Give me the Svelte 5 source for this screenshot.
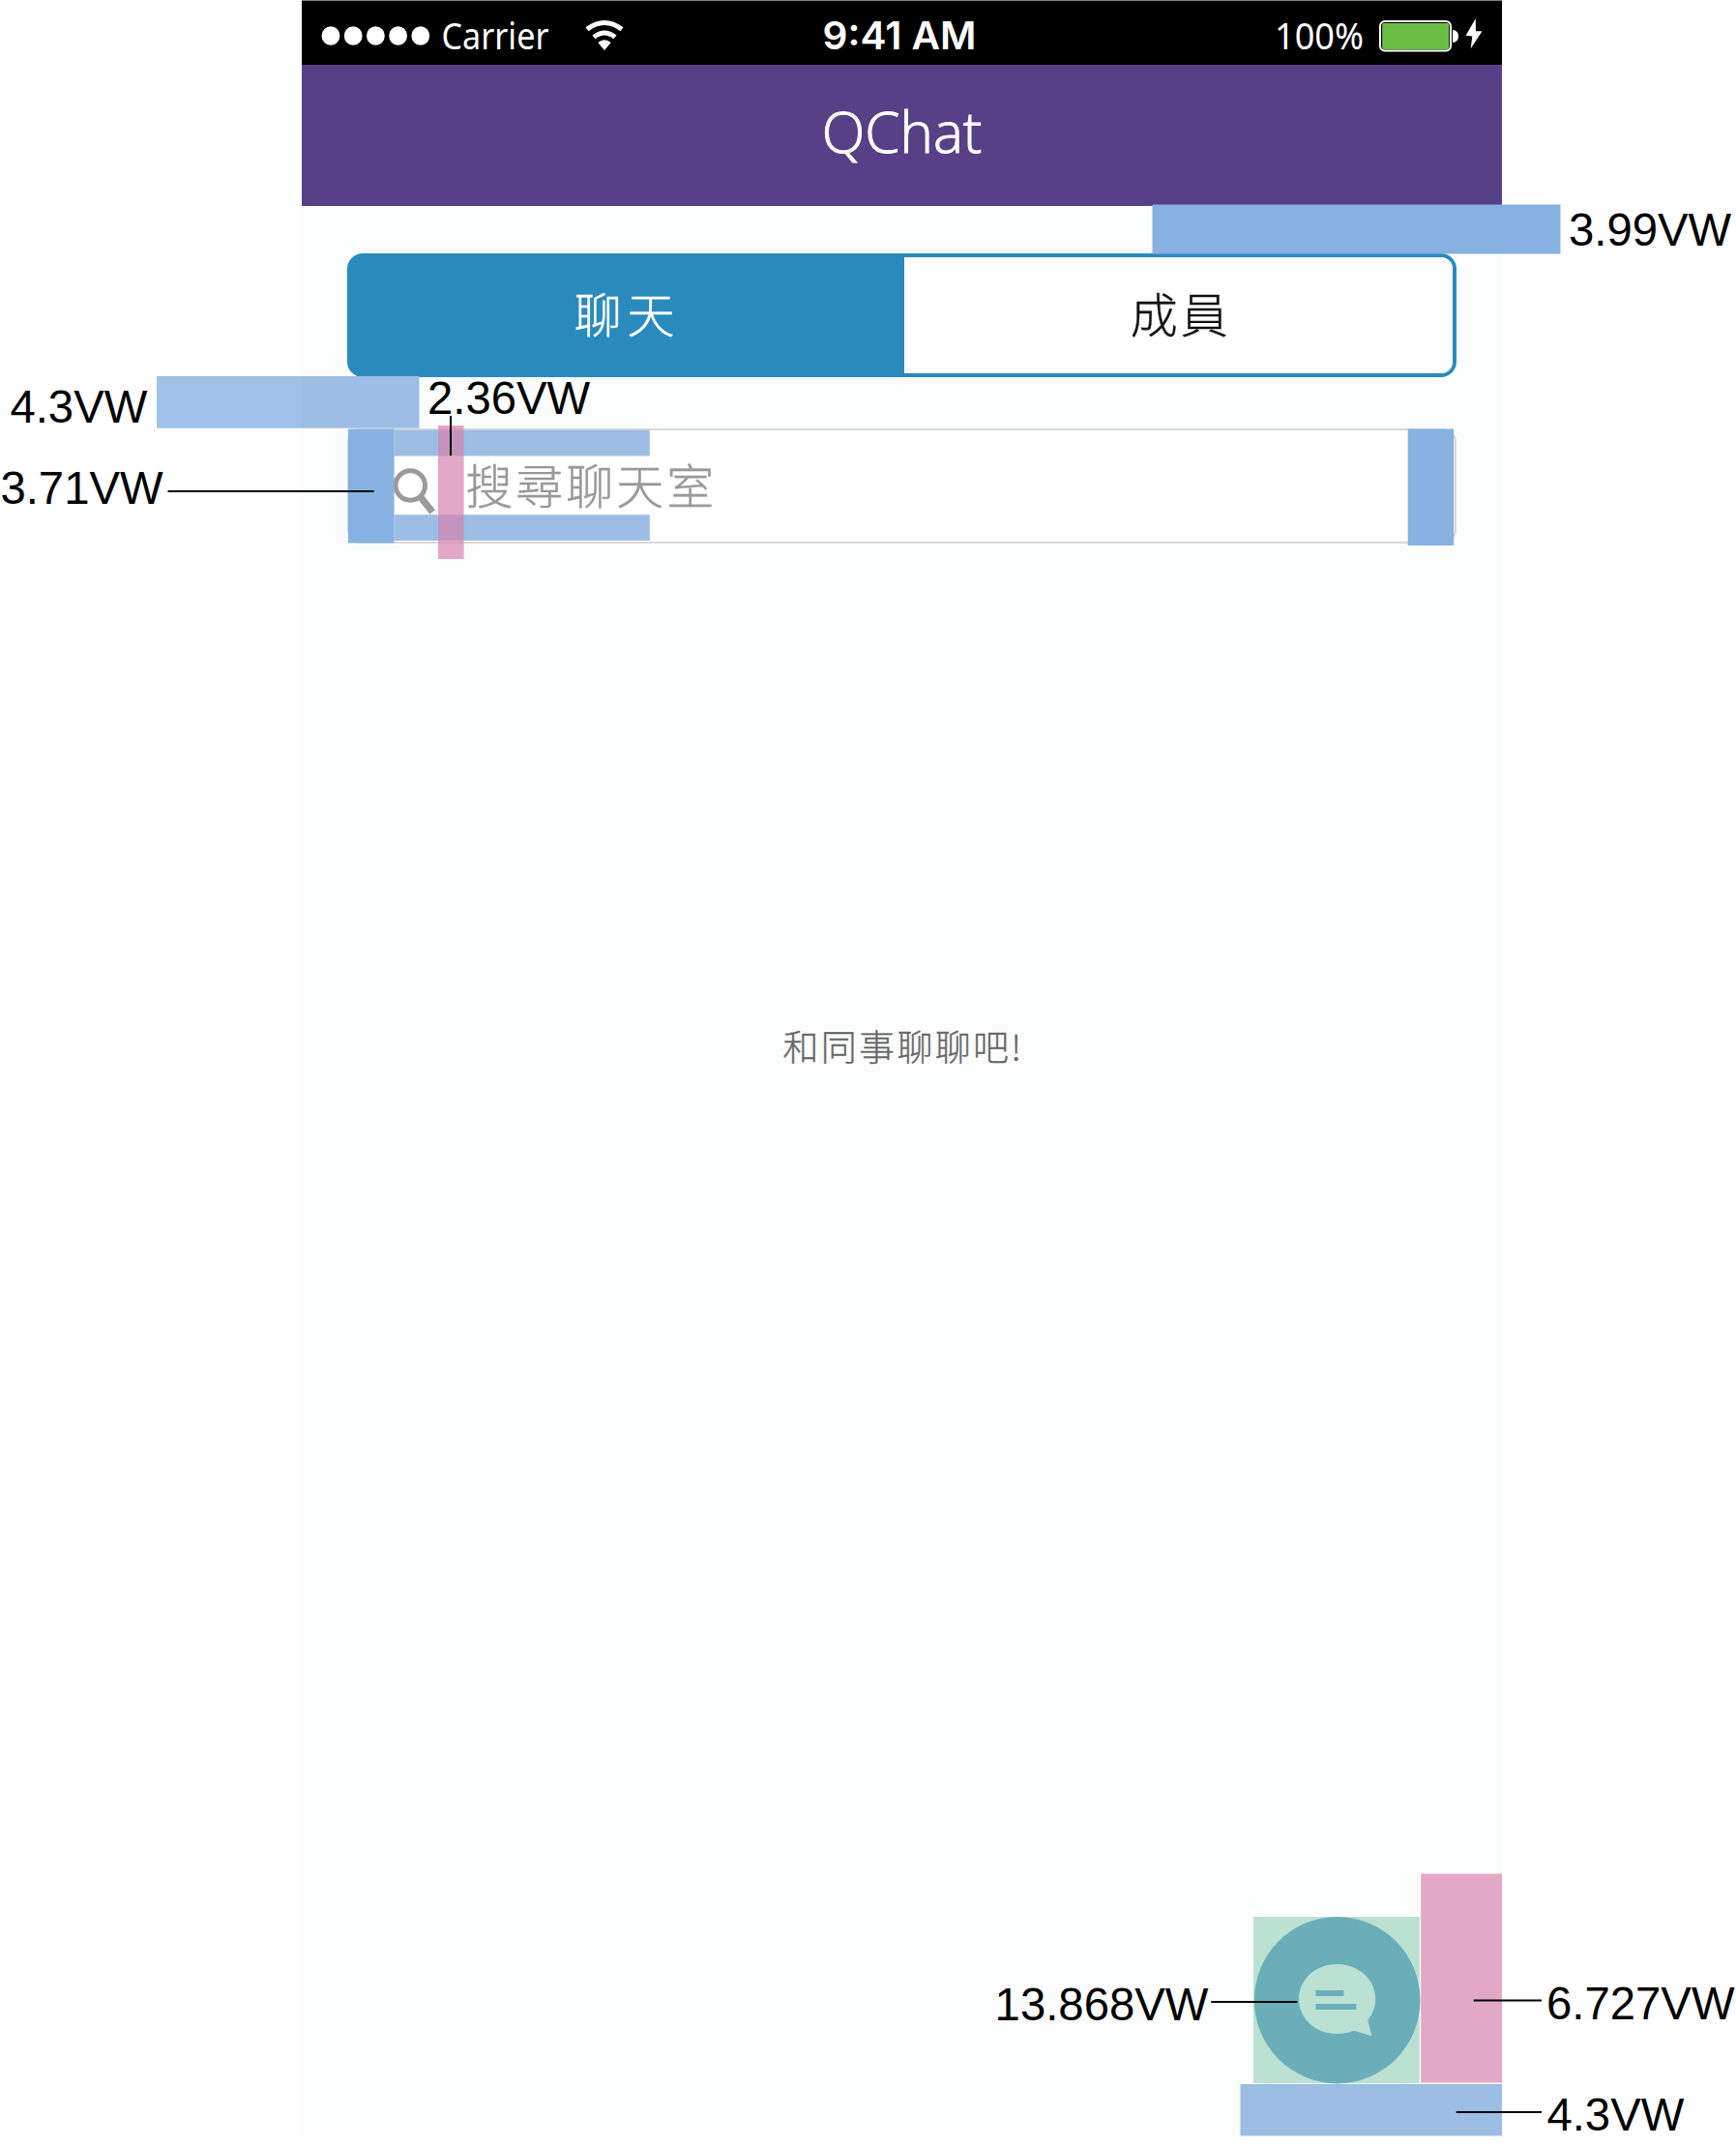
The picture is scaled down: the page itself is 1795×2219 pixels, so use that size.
<script>
  const dots = [342, 365.2, 388.4, 411.6, 434.8];

  const bars = [
    { x: 1191.5, y: 211.5, w: 422, h: 51, tone: 'strong' },
    { x: 162, y: 389, w: 150, h: 53.7, tone: 'soft-out' },
    { x: 312, y: 389, w: 121.5, h: 53.7, tone: 'soft' },
    { x: 407.5, y: 444.7, w: 264.3, h: 26.8, tone: 'soft' },
    { x: 407.5, y: 532.2, w: 264.3, h: 26.8, tone: 'soft' },
    { x: 360, y: 443.5, w: 47.6, h: 118, tone: 'strong' },
    { x: 1455.7, y: 443.5, w: 47.5, h: 120.5, tone: 'strong' },
    { x: 453, y: 440, w: 26.6, h: 138, tone: 'pink' },
    { x: 1469.2, y: 1937.5, w: 83.8, h: 216, tone: 'pink' },
    { x: 1282.5, y: 2155, w: 270.5, h: 53.5, tone: 'soft' }
  ];

  const lines = [
    [173.5, 508, 386.5, 508],
    [466, 430, 466, 471],
    [1252.3, 2070, 1341.3, 2070],
    [1523.7, 2068.5, 1594, 2068.5],
    [1505.7, 2184, 1594, 2184]
  ];

  const labels = [
    { x: 1622, y: 253.6, t: '3.99VW' },
    { x: 10.4, y: 436.6, t: '4.3VW' },
    { x: 442, y: 427.6, t: '2.36VW' },
    { x: 0.4, y: 520.6, t: '3.71VW' },
    { x: 1028.6, y: 2089.2, t: '13.868VW' },
    { x: 1599, y: 2087.6, t: '6.727VW' },
    { x: 1599.4, y: 2203, t: '4.3VW' }
  ];
</script>

<div class="board">
  <main class="phone">
    <svg class="status" viewBox="312 0 1241 67">
      <rect class="edge" x="311" y="0" width="1243" height="1" />
      {#each dots as x}
        <ellipse cx={x} cy="37" rx="9.4" ry="9.8" />
      {/each}
      <text class="thin" x="456.5" y="51" textLength="111" lengthAdjust="spacingAndGlyphs">Carrier</text>
      <path class="arc" d="M607 30.2Q625 16.8 643 30.2" />
      <path class="arc" d="M614 38.4Q625 29.6 636 38.4" />
      <path d="M618.3 44Q625 38.6 631.7 44L625 52Z" />
      <text class="clock" x="850.5" y="51" textLength="159" lengthAdjust="spacingAndGlyphs">9:41 AM</text>
      <text class="thin" x="1318" y="51" textLength="92" lengthAdjust="spacingAndGlyphs">100%</text>
      <rect class="cell" x="1427" y="22" width="73" height="30.5" rx="5" />
      <rect class="charge" x="1429.2" y="24" width="69" height="27" rx="1.5" />
      <path d="M1502 31C1510 31 1510 44 1502 44Z" />
      <path d="M1525.7 19.3L1515.6 36.7L1522.3 37.5L1520.7 50.3L1532.5 32.3L1526 32.3Z" />
    </svg>

    <header class="title">QChat</header>

    <section class="content">
      <nav class="tabs">
        <button class="tab active">聊天</button>
        <button class="tab">成員</button>
      </nav>

      <div class="search">
        <svg class="glass" viewBox="0 0 46 50">
          <circle cx="18.3" cy="18" r="15.3" />
          <path d="M28.5 29.5L41.2 45.5" />
        </svg>
        <span>搜尋聊天室</span>
      </div>

      <p class="empty">和同事聊聊吧!</p>
    </section>
  </main>

  <svg class="spec" viewBox="0 0 1795 2219">
    <rect class="green" x="1296" y="1982" width="171.8" height="172" />
    <ellipse class="fab" cx="1382.7" cy="2068.2" rx="85.8" ry="86.2" />
    <path
      class="green"
      d="M1382.5 2031C1405 2031 1422.2 2047 1422.2 2067C1422.2 2076 1419 2083 1414.3 2088.7L1418.3 2105.3L1400 2099.7C1394 2102 1389 2103 1382.5 2103C1360 2103 1343 2087 1343 2067C1343 2047 1360 2031 1382.5 2031Z"
    />
    <path class="fab" d="M1360.5 2058h29v6h-29zM1360.5 2072h41.8v6h-41.8z" />
    {#each bars as b}
      <rect class={b.tone} x={b.x} y={b.y} width={b.w} height={b.h} />
    {/each}
    {#each lines as [x1, y1, x2, y2]}
      <line {x1} {y1} {x2} {y2} />
    {/each}
    {#each labels as l}
      <text x={l.x} y={l.y}>{l.t}</text>
    {/each}
  </svg>
</div>

<style>
  :global(body) {
    background: #fff;
  }

  .board {
    position: relative;
    width: 1795px;
    height: 2219px;
    overflow: hidden;
  }

  .phone {
    display: flex;
    flex-direction: column;
    width: 1241px;
    height: 2208.5px;
    margin-left: 312px;
    background: #fbfdfc;
    font-family: 'Noto Sans CJK TC', sans-serif;
  }

  .status {
    flex: none;
    width: 1241px;
    height: 67px;
    background: #000;
    fill: #fff;
  }

  .edge {
    fill: #808080;
  }

  .arc {
    fill: none;
    stroke: #fff;
    stroke-width: 5;
  }

  .thin {
    font: 400 38.5px 'Noto Sans', sans-serif;
  }

  .clock {
    font: 600 40px Inter, sans-serif;
  }

  .cell {
    fill: #000;
    stroke: #fff;
    stroke-width: 2;
  }

  .charge {
    fill: #69bd45;
  }

  .title {
    flex: none;
    height: 145.5px;
    background: #574086;
    color: #fff;
    font: 300 58.3px/138px 'Open Sans', sans-serif;
    -webkit-text-stroke: 1px #fff;
    text-align: center;
  }

  .content {
    display: flex;
    flex-direction: column;
    padding: 49.5px 47.2px 0 47.2px;
  }

  .tabs {
    display: flex;
    height: 128px;
    box-sizing: border-box;
    border: 4px solid #2a8abd;
    border-radius: 16px;
    overflow: hidden;
    background: linear-gradient(90deg, #2a8abd 50%, #fff 50%);
  }

  .tab {
    flex: 1;
    padding: 0 0 6px 5px;
    border: 0;
    background: #fff;
    color: #111;
    font: 300 49px/114px 'Noto Sans CJK TC', sans-serif;
    letter-spacing: 3px;
    -webkit-text-stroke: 0.4px currentColor;
  }

  .active {
    flex: 0 0 571.5px;
    padding: 0 1px 6px 0;
    background: #2a8abd;
    color: #fff;
    letter-spacing: 5.6px;
  }

  .search {
    display: flex;
    align-items: center;
    height: 119px;
    margin-top: 53px;
    padding-left: 45px;
    box-sizing: border-box;
    border: 2px solid #d8d8d8;
    border-radius: 14px;
    background: #fff;
    color: #999;
    font-size: 49px;
    font-weight: 300;
    letter-spacing: 3px;
  }

  .search span {
    margin-left: 29px;
    padding-bottom: 7px;
    -webkit-text-stroke: 0.4px #999;
  }

  .glass {
    width: 46px;
    height: 50px;
    margin-top: 13px;
    fill: none;
    stroke: #9a9a9a;
    stroke-width: 4.9;
  }

  .glass path {
    stroke-width: 7;
  }

  .empty {
    margin: 489px 0 0 3px;
    color: #666;
    font-size: 37px;
    font-weight: 300;
    line-height: 60px;
    letter-spacing: 2.3px;
    text-align: center;
    -webkit-text-stroke: 0.3px #666;
  }

  .spec {
    position: absolute;
    left: 0;
    top: 0;
    width: 1795px;
    height: 2219px;
    font: 47.3px 'Liberation Sans', Arial, sans-serif;
  }

  .spec line {
    stroke: #000;
    stroke-width: 2;
  }

  .strong {
    fill: #87b1e0;
  }

  .soft {
    fill: #9cbde4;
  }

  .soft-out {
    fill: #a0c1e8;
  }

  .pink {
    fill: rgba(215, 131, 174, 0.7);
  }

  .spec .green {
    fill: #bbe1d3;
  }

  .spec .fab {
    fill: #6aaeba;
  }
</style>
